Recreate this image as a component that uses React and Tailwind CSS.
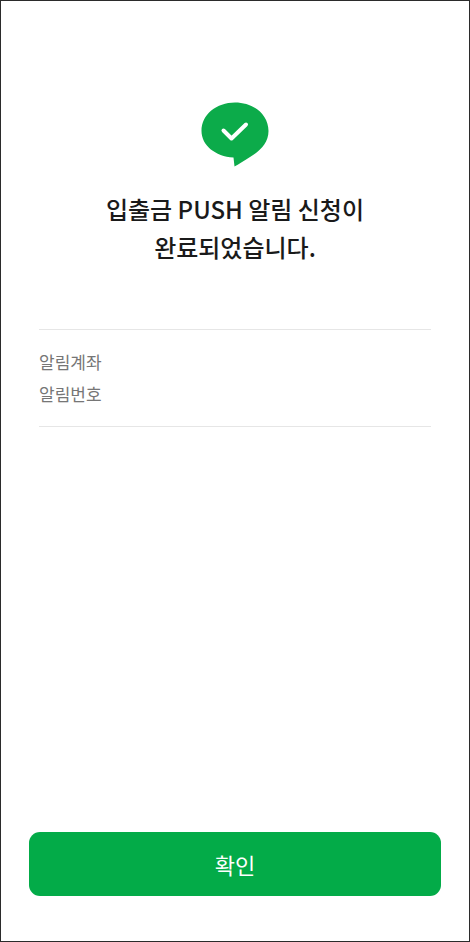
const App = () => {
    return (
        <div className="flex flex-col h-[942px] w-[470px] bg-white border border-[#2b2b2b] font-['Noto_Sans_CJK_KR','Noto_Sans',sans-serif]">
            <div className="flex flex-col items-center pt-[101px]">
                <svg width="68" height="66" viewBox="0 0 68 66">
                    <path fill="#0cab4a" d="M34 0.5C52.5 0.5 67.5 12.5 67.5 29C67.5 41 59 49 49 55C44 58 38 62 33.5 64.5L32.5 55.5C14 54.5 0.5 43 0.5 29C0.5 12.5 15.5 0.5 34 0.5Z" />
                    <path fill="none" stroke="#fff" strokeWidth="4" strokeLinecap="round" strokeLinejoin="round" d="M22.5 28.5L30.5 36.5L45 22.5" />
                </svg>
                <h1 className="mt-[22px] text-center text-[24px] leading-[38px] font-medium text-[#1a1a1a]">
                    입출금 PUSH 알림 신청이<br />완료되었습니다.
                </h1>
            </div>
            <div className="mx-[38px] mt-[63px] flex flex-col gap-[8px] border-y border-[#e6e6e6] pt-[20px] pb-[20px] text-[17px] leading-[24px] text-[#767676]">
                <div>알림계좌</div>
                <div>알림번호</div>
            </div>
            <div className="flex-1" />
            <button className="mx-[28px] mb-[45px] h-[64px] rounded-[11px] bg-[#03ab48] text-[22px] text-white">확인</button>
        </div>
    )
}

export default App
